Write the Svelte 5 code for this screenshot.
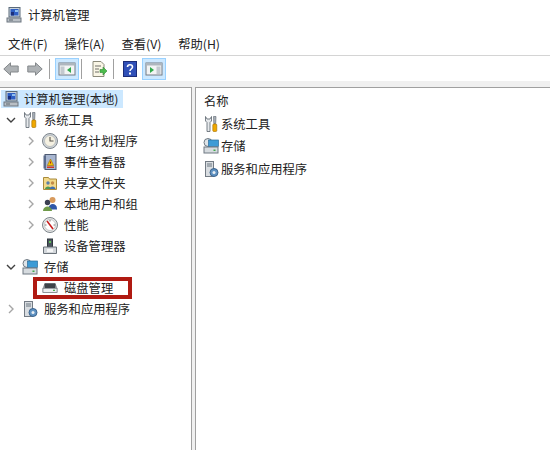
<script>
  const tree = [
    { label: "系统工具", icon: "tools", arrow: "open", depth: 1 },
    { label: "任务计划程序", icon: "clock", arrow: "closed", depth: 2 },
    { label: "事件查看器", icon: "event", arrow: "closed", depth: 2 },
    { label: "共享文件夹", icon: "share", arrow: "closed", depth: 2 },
    { label: "本地用户和组", icon: "users", arrow: "closed", depth: 2 },
    { label: "性能", icon: "perf", arrow: "closed", depth: 2 },
    { label: "设备管理器", icon: "device", arrow: "", depth: 2 },
    { label: "存储", icon: "storage", arrow: "open", depth: 1 },
    { label: "磁盘管理", icon: "disk", arrow: "", depth: 2, marked: true },
    { label: "服务和应用程序", icon: "service", arrow: "closed", depth: 1 },
  ];

  const listItems = [
    { label: "系统工具", icon: "tools" },
    { label: "存储", icon: "storage" },
    { label: "服务和应用程序", icon: "service" },
  ];
</script>

{#snippet icon(name)}
  <svg class="ico" viewBox="0 0 16 16" width="16" height="16">
    {#if name === "computer"}
      <rect x="3" y="0.500" width="11" height="9.500" fill="#c9d3dc" stroke="#5b6a7a" />
      <rect x="4.500" y="2" width="8" height="6.500" fill="#2e5fc4" />
      <path d="M5 5h3v3.500H5z" fill="#1b2f7a" />
      <path d="M9 3h3v2H9z" fill="#8fc0ef" />
      <rect x="1" y="11" width="14" height="4" fill="#b9bfc5" stroke="#6d7680" />
      <path d="M3 13h4" stroke="#5d666f" />
    {:else if name === "tools"}
      <path d="M2.500 0.500v4.500l1.500 1.500v9h3v-9l1.500-1.500V0.500l-1.500 2.500H4z" fill="#e6e9ec" stroke="#59626c" stroke-width=".8" />
      <path d="M10.500 0.500h2.500l-.3 7h-1.900z" fill="#aab2ba" stroke="#59626c" stroke-width=".6" />
      <rect x="9.800" y="8" width="4" height="7.500" rx="1" fill="#f0a800" stroke="#a06c00" stroke-width=".6" />
    {:else if name === "clock"}
      <circle cx="8" cy="8" r="7.500" fill="#cfd4d8" stroke="#7d858c" />
      <circle cx="8" cy="8" r="5.500" fill="#f5f1e2" stroke="#a3a9ae" stroke-width=".6" />
      <path d="M8 4v4h3.500" fill="none" stroke="#56534a" stroke-width="1.100" />
    {:else if name === "event"}
      <rect x="3" y="0.500" width="11" height="15" fill="#a8b6d0" stroke="#4e5a72" />
      <rect x="1.500" y="1.500" width="2.500" height="13" fill="#5a6a8a" />
      <path d="M8.500 5l3.200 6.500H5.300z" fill="#f3c200" stroke="#a36a00" stroke-width=".6" />
      <rect x="8" y="7.500" width="1" height="2" fill="#b02018" />
      <rect x="5" y="12.500" width="7" height="1.500" fill="#d03828" />
    {:else if name === "share"}
      <path d="M1.500 2.500h5l1 1.500h7v10.500h-13z" fill="#f2d98a" stroke="#a98a3a" />
      <circle cx="6" cy="8" r="1.700" fill="#5b7fa8" />
      <path d="M3 14c0-3.500 6-3.500 6 0z" fill="#4f9a55" />
      <circle cx="10.500" cy="8" r="1.700" fill="#c38b48" />
      <path d="M7.500 14c0-3.500 6-3.500 6 0z" fill="#3f6fb0" />
    {:else if name === "users"}
      <circle cx="10.500" cy="4" r="3" fill="#d89a5c" />
      <path d="M6.500 12.500c0-6 8.500-6 8.500 0v1H6.500z" fill="#2f57a8" />
      <circle cx="5.500" cy="6.500" r="2.700" fill="#3b3f52" />
      <path d="M1 15c0-6 9-6 9 0z" fill="#6f9a4a" />
    {:else if name === "perf"}
      <circle cx="8" cy="8" r="7.500" fill="#e8e8e6" stroke="#7d858c" />
      <circle cx="8" cy="8" r="5.500" fill="#fff" stroke="#a3a9ae" stroke-width=".6" />
      <path d="M5 4l6 8" stroke="#c81e1e" stroke-width="1.500" />
      <path d="M8 3v1.500M13 8h-1.500M3 8h1.500" stroke="#555" stroke-width=".8" />
    {:else if name === "device"}
      <rect x="5.500" y="1" width="5" height="8" fill="#4d5660" stroke="#2f363d" />
      <rect x="7" y="3" width="2" height="2" fill="#62c05a" />
      <path d="M1.500 9h13v6.500h-13z" fill="#d3d7db" stroke="#6b737b" />
      <rect x="5" y="11" width="6" height="3" fill="#f4f5f6" />
    {:else if name === "storage"}
      <circle cx="5" cy="4.500" r="4" fill="#dfe4e8" stroke="#6f7982" />
      <rect x="5.500" y="2" width="10" height="6.500" fill="#3d9bd6" stroke="#2a6d9c" stroke-width=".7" />
      <rect x="1" y="9" width="14" height="6" fill="#d6dbdf" stroke="#6f7982" />
      <rect x="10.500" y="11.500" width="2" height="1.500" fill="#3fa94a" />
    {:else if name === "disk"}
      <path d="M3 3.500h10l2 5v4H1v-4z" fill="#cfd3d7" stroke="#6b7077" stroke-width=".7" />
      <rect x="2.500" y="3.500" width="11" height="4.500" fill="#3e4349" />
      <rect x="1" y="8.500" width="14" height="4" fill="#eceef0" stroke="#7b8087" stroke-width=".7" />
      <rect x="11" y="9.700" width="2" height="1.300" fill="#4caf50" />
    {:else if name === "service"}
      <rect x="2.500" y="0.500" width="8" height="15" fill="#d9dde1" stroke="#737b84" />
      <path d="M4 3h5M4 5h5" stroke="#6b7680" />
      <circle cx="11" cy="11.500" r="4" fill="#5f92c2" stroke="#3c648e" />
      <circle cx="11" cy="11.500" r="1.500" fill="#e9eef3" />
    {/if}
  </svg>
{/snippet}

{#snippet arrow(kind)}
  <svg class="arrow" viewBox="0 0 12 12" width="12" height="12">
    {#if kind === "open"}
      <path d="M2 4l4 4 4-4" fill="none" stroke="#404040" stroke-width="1.400" />
    {:else if kind === "closed"}
      <path d="M4 2l4 4-4 4" fill="none" stroke="#a6a6a6" stroke-width="1.400" />
    {/if}
  </svg>
{/snippet}

<div class="window">
  <header class="title">
    {@render icon("computer")}
    <span>计算机管理</span>
  </header>

  <nav class="menu">
    <span>文件(F)</span>
    <span>操作(A)</span>
    <span>查看(V)</span>
    <span>帮助(H)</span>
  </nav>

  <div class="toolbar">
    <svg class="tool" viewBox="0 0 16 14" width="16" height="14">
      <path d="M7.500 0.800L0.800 7l6.700 6.200V10h7.700V4H7.500z" fill="#aeb2b5" stroke="#84888b" />
    </svg>
    <svg class="tool" viewBox="0 0 16 14" width="16" height="14">
      <path d="M8.500 0.800L15.200 7l-6.700 6.200V10H0.800V4h7.700z" fill="#aeb2b5" stroke="#84888b" />
    </svg>
    <i class="sep"></i>
    <span class="btn on">
      <svg viewBox="0 0 18 16" width="18" height="16">
        <rect x="1" y="2" width="16" height="12" fill="#f3f4f5" stroke="#737b84" />
        <rect x="1" y="2" width="16" height="2.500" fill="#aeb6be" />
        <rect x="2.500" y="5.500" width="4" height="7.500" fill="#c3c9cf" />
        <path d="M13 6v6l-4-3z" fill="#2faa4a" />
      </svg>
    </span>
    <i class="sep"></i>
    <span class="btn">
      <svg viewBox="0 0 18 18" width="18" height="18">
        <path d="M3 1.500h8l3 3v12H3z" fill="#faf6e6" stroke="#8b8a7a" />
        <path d="M5 6h6M5 9h4M5 12h4" stroke="#6f6f68" />
        <path d="M10 9.500h3V7l4 4-4 4v-2.500h-3z" fill="#4cbb4c" stroke="#2f8a34" stroke-width=".6" />
      </svg>
    </span>
    <i class="sep"></i>
    <span class="btn help">
      <svg viewBox="0 0 14 16" width="14" height="16">
        <rect x=".5" y=".5" width="13" height="15" fill="#3050b8" stroke="#1c2c78" />
        <path d="M4.500 6c0-3 5-3 5 0 0 2-2.500 2-2.500 4" fill="none" stroke="#fff" stroke-width="1.600" />
        <rect x="6" y="11.500" width="2" height="2" fill="#fff" />
      </svg>
    </span>
    <span class="btn on">
      <svg viewBox="0 0 18 16" width="18" height="16">
        <rect x="1" y="2" width="16" height="12" fill="#f3f4f5" stroke="#737b84" />
        <rect x="1" y="2" width="16" height="2.500" fill="#aeb6be" />
        <rect x="11.500" y="5.500" width="4" height="7.500" fill="#c3c9cf" />
        <path d="M5 6v6l4-3z" fill="#2faa4a" />
      </svg>
    </span>
  </div>

  <div class="panes">
    <aside class="left">
      <div class="root">
        {@render icon("computer")}
        <span>计算机管理(本地)</span>
      </div>
      {#each tree as node}
        <div class="node" class:deep={node.depth === 2}>
          {@render arrow(node.arrow)}
          {@render icon(node.icon)}
          <span class="label">{node.label}</span>
          {#if node.marked}<i class="mark"></i>{/if}
        </div>
      {/each}
    </aside>

    <main class="right">
      <div class="head">名称</div>
      {#each listItems as item}
        <div class="item">
          {@render icon(item.icon)}
          <span>{item.label}</span>
        </div>
      {/each}
    </main>
  </div>
</div>

<style>
  :global(body) {
    margin: 0;
    background: #fff;
  }
  .window {
    width: 550px;
    height: 450px;
    display: flex;
    flex-direction: column;
    overflow: hidden;
    font-family: "Noto Sans CJK SC", "Liberation Sans", sans-serif;
    font-size: 12.3px;
    color: #222;
  }
  .ico {
    flex: none;
  }
  .title {
    height: 30px;
    display: flex;
    align-items: center;
    gap: 6px;
    padding-left: 6px;
  }
  .menu {
    height: 25px;
    box-sizing: border-box;
    padding: 2px 0 0 8px;
    display: flex;
    align-items: center;
    gap: 16.700px;
  }
  .toolbar {
    height: 26px;
    display: flex;
    align-items: center;
    padding-left: 3px;
    border-top: 1px solid #d4d4d4;
    box-sizing: border-box;
  }
  .tool {
    margin-right: 8px;
  }
  .sep {
    width: 1px;
    height: 20px;
    background: #a0a0a0;
    margin: 0 5px 0 2px;
  }
  .tool + .sep {
    margin-left: -2px;
  }
  .btn {
    width: 24px;
    height: 22px;
    display: flex;
    align-items: center;
    justify-content: center;
    box-sizing: border-box;
  }
  .btn.on {
    background: #cce8ff;
    border: 1px solid #99d1ff;
  }
  .btn.help {
    margin-left: -1px;
  }
  .panes {
    flex: 1;
    display: flex;
    gap: 3px;
    background: #f0f0f0;
    padding-top: 6px;
    min-height: 0;
  }
  .left {
    width: 192px;
    background: #fff;
    border-top: 1px solid #a0a0a0;
    border-right: 1px solid #a0a0a0;
    box-sizing: border-box;
    padding: 2px 0 0 1px;
  }
  .right {
    flex: 1;
    background: #fff;
    border-top: 1px solid #a0a0a0;
    border-left: 1px solid #a0a0a0;
    padding: 3.500px 0 0 8px;
  }
  .root {
    height: 18px;
    width: 122px;
    box-sizing: border-box;
    padding-left: 2px;
    margin-bottom: 1.500px;
    display: flex;
    align-items: center;
    gap: 5px;
    background: #cce8ff;
  }
  .node {
    position: relative;
    height: 21px;
    display: flex;
    align-items: center;
    gap: 5px;
    padding-left: 4px;
    white-space: nowrap;
  }
  .node.deep {
    padding-left: 24px;
  }
  .label {
    margin-left: 1px;
  }
  .mark {
    position: absolute;
    left: 32px;
    top: -0.500px;
    width: 99px;
    height: 22px;
    box-sizing: border-box;
    border: 4px solid #b01a12;
  }
  .head {
    height: 19px;
    line-height: 19px;
    margin-bottom: 2px;
  }
  .item {
    height: 22.500px;
    margin-left: -1px;
    display: flex;
    align-items: center;
    gap: 2px;
  }
</style>
